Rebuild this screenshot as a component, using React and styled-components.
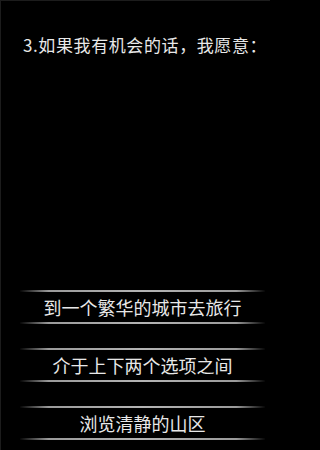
import React from "react";
import styled, { createGlobalStyle } from "styled-components";

const GlobalStyle = createGlobalStyle`
  html, body {
    margin: 0;
    padding: 0;
    background: #000;
  }
  body {
    font-family: "Noto Sans CJK SC", "Noto Sans", sans-serif;
  }
`;

const Screen = styled.div`
  box-sizing: border-box;
  width: 270px;
  height: 450px;
  display: flex;
  flex-direction: column;
  background: #000;
  border-top: 1px solid #1c1c1c;
  border-left: 1px solid #1c1c1c;
  overflow: hidden;
`;

const Question = styled.div`
  margin: 32px 0 0 22px;
  color: #e8e8e8;
  font-size: 17px;
  line-height: 24px;
  letter-spacing: 0.6px;
  white-space: nowrap;
`;

const Options = styled.div`
  margin-top: auto;
  margin-bottom: 10px;
  display: flex;
  flex-direction: column;
  gap: 24px;
`;

const Option = styled.div`
  box-sizing: border-box;
  height: 34px;
  margin: 0 5px 0 19px;
  display: flex;
  align-items: center;
  justify-content: center;
  color: #e8e8e8;
  font-size: 18px;
  border-style: solid;
  border-width: 2px 0;
  border-image: linear-gradient(
      to right,
      rgba(150, 150, 150, 0) 0%,
      #9a9a9a 12%,
      #b4b4b4 50%,
      #9a9a9a 88%,
      rgba(150, 150, 150, 0) 100%
    )
    1;
`;

const options = ["到一个繁华的城市去旅行", "介于上下两个选项之间", "浏览清静的山区"];

export default function App() {
  return (
    <>
      <GlobalStyle />
      <Screen>
        <Question>3.如果我有机会的话，我愿意：</Question>
        <Options>
          {options.map((o) => (
            <Option key={o}>{o}</Option>
          ))}
        </Options>
      </Screen>
    </>
  );
}
